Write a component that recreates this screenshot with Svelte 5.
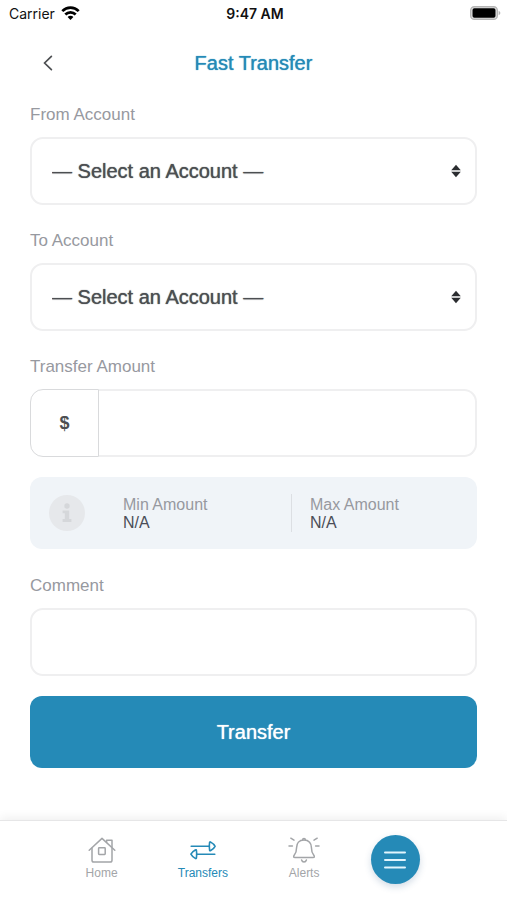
<script lang="ts">
  let fromAccount = $state('');
  let toAccount = $state('');
  let amount = $state('');
  let comment = $state('');

  const limits = [
    { label: 'Min Amount', value: 'N/A' },
    { label: 'Max Amount', value: 'N/A' }
  ];
</script>

{#snippet accountSelect(id: string, label: string, value: string, onpick: (v: string) => void)}
  <div class="field">
    <label for={id}>{label}</label>
    <div class="select-wrap">
      <select {id} {value} onchange={(e) => onpick(e.currentTarget.value)}>
        <option value="">— Select an Account —</option>
      </select>
      <svg class="sort" width="10" height="14" viewBox="0 0 10 14" fill="#2b2d30" aria-hidden="true">
        <path d="M5 0.8L9.8 6.2H0.2Z" />
        <path d="M5 13.2L9.8 7.8H0.2Z" />
      </svg>
    </div>
  </div>
{/snippet}

<div class="screen">
  <div class="status">
    <div class="carrier">
      <span>Carrier</span>
      <svg width="19" height="14" viewBox="0 0 19 14" fill="none" stroke="#000" stroke-width="2.7" aria-hidden="true">
        <path d="M1.3 5.1C5.9 0.4 13.1 0.4 17.7 5.1" />
        <path d="M4.3 8.5C7.2 5.6 11.8 5.6 14.7 8.5" />
        <path d="M9.5 13.9L6.6 10.9C8.2 9.4 10.8 9.4 12.4 10.9Z" fill="#000" stroke="none" />
      </svg>
    </div>
    <strong>9:47 AM</strong>
    <svg class="battery" width="32" height="16" viewBox="0 0 32 16" aria-hidden="true">
      <rect x="1.7" y="1.7" width="26.6" height="12.6" rx="3.6" fill="#e4e4e4" stroke="#b5b5b5" stroke-width="1.4" />
      <rect x="3.5" y="3.3" width="23" height="9.4" rx="1.8" fill="#000" />
      <path d="M29.6 5.8Q31.4 6.6 31.4 8T29.6 10.2Z" fill="#b5b5b5" />
    </svg>
  </div>

  <header>
    <button class="back" type="button" aria-label="Back">
      <svg width="10" height="16" viewBox="0 0 10 16" fill="none" stroke="#4c4e51" stroke-width="1.7" stroke-linecap="round">
        <path d="M8.4 1.4L1.6 8L8.4 14.6" />
      </svg>
    </button>
    <h1>Fast Transfer</h1>
  </header>

  <form onsubmit={(e) => e.preventDefault()}>
    {@render accountSelect('from', 'From Account', fromAccount, (v) => (fromAccount = v))}
    {@render accountSelect('to', 'To Account', toAccount, (v) => (toAccount = v))}

    <div class="field amount-field">
      <label for="amount">Transfer Amount</label>
      <div class="amount">
        <span class="currency">$</span>
        <input id="amount" type="text" inputmode="decimal" bind:value={amount} />
      </div>
    </div>

    <div class="limits">
      <svg width="36" height="36" viewBox="0 0 36 36" aria-hidden="true">
        <circle cx="18" cy="18" r="18" fill="#e6e8eb" />
        <g fill="#d5d7da">
          <circle cx="18" cy="11" r="2.7" />
          <path d="M13.6 15.4H20.2V24H22.4V27H13.6V24H15.8V18.2H13.6Z" />
        </g>
      </svg>
      <dl>
        {#each limits as limit}
          <div>
            <dt>{limit.label}</dt>
            <dd>{limit.value}</dd>
          </div>
        {/each}
      </dl>
    </div>

    <div class="field comment-field">
      <label for="comment">Comment</label>
      <input id="comment" type="text" bind:value={comment} />
    </div>

    <button class="submit" type="submit">Transfer</button>
  </form>

  <nav>
    <a href="#home">
      <svg width="28" height="26" viewBox="0 0 28 26" fill="none" stroke="#a3a5a8" stroke-width="1.5" stroke-linecap="round" stroke-linejoin="round">
        <path d="M1.2 13.2L14 1.4L26.8 13.2" />
        <path d="M4 11.2V23.2Q4 25 5.8 25H22.2Q24 25 24 23.2V11.2" />
        <path d="M18.6 5.2V3.2H24V10" />
        <rect x="10.6" y="10.8" width="6.6" height="6.6" rx="0.6" />
      </svg>
      <span>Home</span>
    </a>
    <a href="#transfers" class="active" aria-current="page">
      <svg width="28" height="26" viewBox="0 0 28 26" fill="none" stroke="#258ab7" stroke-width="1.6" stroke-linecap="round" stroke-linejoin="round">
        <path d="M2.2 9.3H20.4" />
        <path d="M20.6 5.4Q20.8 4.6 21.7 5.1Q24.8 6.8 26.1 9.3Q24.8 11.8 21.7 13.5Q20.8 14 20.6 13.2Q19.9 9.3 20.6 5.4Z" />
        <path d="M25.8 17.2H7.6" />
        <path d="M7.4 13.3Q7.2 12.5 6.3 13Q3.2 14.7 1.9 17.2Q3.2 19.7 6.3 21.4Q7.2 21.9 7.4 21.1Q8.1 17.2 7.4 13.3Z" />
      </svg>
      <span>Transfers</span>
    </a>
    <a href="#alerts">
      <svg width="32" height="26" viewBox="0 0 32 26" fill="none" stroke="#a3a5a8" stroke-width="1.5" stroke-linecap="round" stroke-linejoin="round">
        <path d="M14.6 3.2Q14.6 1.6 16 1.6T17.4 3.2" />
        <path d="M16 3C11 3 8.6 6.4 8.6 10.4C8.6 14.6 8 16 6.2 18.2Q4.8 20.6 7 20.6H25Q27.2 20.6 25.8 18.2C24 16 23.4 14.6 23.4 10.4C23.4 6.4 21 3 16 3Z" />
        <path d="M13.6 23Q14.2 25 16 25T18.4 23" />
        <path d="M2.8 1.2L6 3.2M1 9H4.4M29.2 1.2L26 3.2M31 9H27.6" />
      </svg>
      <span>Alerts</span>
    </a>
    <div class="menu-slot">
      <button class="menu" type="button" aria-label="Menu">
        <svg width="22" height="18" viewBox="0 0 22 18" stroke="#e2f5fd" stroke-width="2" stroke-linecap="round">
          <path d="M1 1.4H21M1 9H21M1 16.6H21" />
        </svg>
      </button>
    </div>
  </nav>
</div>

<style>
  :global(body) {
    background: #fff;
  }

  .screen {
    display: flex;
    flex-direction: column;
    min-height: 100vh;
    font-family: 'Liberation Sans', Arial, sans-serif;
    color: #4c4f52;
  }

  button,
  input,
  select {
    box-sizing: border-box;
    margin: 0;
    font: inherit;
    color: inherit;
  }

  svg {
    flex: none;
  }

  .status {
    display: grid;
    grid-template-columns: 1fr auto 1fr;
    align-items: center;
    height: 26px;
    padding: 0 6px 0 9px;
    font-family: Inter, 'Liberation Sans', sans-serif;
    font-size: 14px;
    color: #111;
  }

  .status strong {
    font-weight: 600;
  }

  .carrier {
    display: flex;
    align-items: center;
    gap: 6px;
  }

  .battery {
    justify-self: end;
  }

  header {
    display: grid;
    grid-template-columns: 40px 1fr 40px;
    align-items: center;
    height: 74px;
    padding: 0 28px;
  }

  .back {
    display: flex;
    align-items: center;
    justify-content: center;
    height: 40px;
    padding: 0;
    border: 0;
    background: none;
  }

  h1 {
    margin: 0;
    font-size: 20px;
    font-weight: 400;
    line-height: 24px;
    text-align: center;
    color: #258ab7;
    text-shadow: 0 0 1px #258ab7;
  }

  form {
    display: flex;
    flex-direction: column;
    padding: 5px 30px 0;
  }

  .field {
    display: flex;
    flex-direction: column;
    gap: 12px;
    margin-bottom: 26px;
  }

  .amount-field,
  .comment-field {
    margin-bottom: 20px;
  }

  label {
    font-size: 17px;
    line-height: 20px;
    color: #97999f;
  }

  select,
  .field input {
    width: 100%;
    height: 68px;
    padding: 0 20px;
    border: 2px solid #efeff0;
    border-radius: 13px;
    background: #fff;
    font-size: 20px;
    outline: none;
  }

  .select-wrap {
    position: relative;
  }

  select {
    display: block;
    appearance: none;
    text-shadow: 0 0 1px #4c4f52;
  }

  .sort {
    position: absolute;
    top: 27px;
    right: 16px;
    pointer-events: none;
  }

  .amount {
    display: flex;
  }

  .currency {
    box-sizing: border-box;
    display: flex;
    flex: none;
    align-items: center;
    justify-content: center;
    width: 69px;
    height: 68px;
    border: 1px solid #d9dadc;
    border-radius: 13px 0 0 13px;
    font-size: 18px;
    font-weight: 700;
  }

  .amount input {
    flex: 1;
    min-width: 0;
    border-left: 0;
    border-radius: 0 13px 13px 0;
  }

  .limits {
    display: flex;
    align-items: center;
    box-sizing: border-box;
    height: 72px;
    margin-bottom: 27px;
    padding-left: 19px;
    border-radius: 12px;
    background: #f0f4f8;
  }

  dl {
    display: grid;
    grid-template-columns: 1fr 1fr;
    flex: 1;
    margin: 0 0 0 20px;
    font-size: 16px;
    line-height: 18px;
  }

  dl div {
    padding: 2px 0 0 18px;
  }

  dl div + div {
    border-left: 1px solid #dcdfe3;
  }

  dt {
    color: #97999f;
  }

  dd {
    margin: 0;
    color: #4a4d57;
  }

  .submit {
    height: 72px;
    border: 0;
    border-radius: 12px;
    background: #258ab7;
    font-size: 20px;
    color: #fff;
    text-shadow: 0 0 1px #fff;
  }

  nav {
    display: grid;
    grid-template-columns: repeat(4, 1fr);
    align-items: start;
    box-sizing: border-box;
    height: 80px;
    margin-top: auto;
    padding: 14px 51px 0;
    border-top: 1px solid #e6e6e7;
    box-shadow: 0 -2px 10px rgba(0, 0, 0, 0.07);
  }

  nav a {
    display: flex;
    flex-direction: column;
    align-items: center;
    gap: 3px;
    padding-top: 2px;
    font-size: 12px;
    line-height: 14px;
    color: #a3a5a8;
    text-decoration: none;
  }

  nav a.active {
    color: #258ab7;
  }

  .menu-slot {
    padding-left: 16px;
  }

  .menu {
    display: flex;
    align-items: center;
    justify-content: center;
    width: 49px;
    height: 49px;
    padding: 0;
    border: 0;
    border-radius: 50%;
    background: #258ab7;
    box-shadow: 0 3px 7px rgba(37, 80, 130, 0.2);
  }
</style>
